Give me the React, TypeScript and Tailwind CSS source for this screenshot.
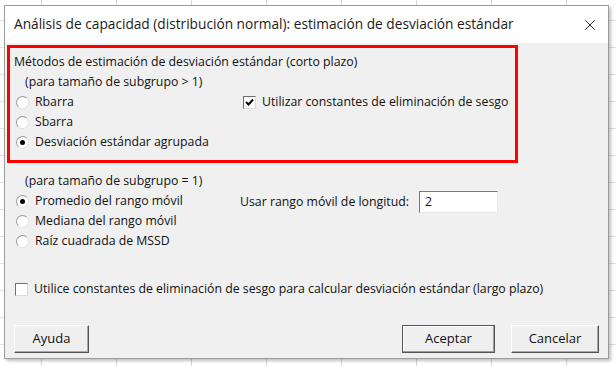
import { X } from "lucide-react";

function Radio({ checked, label }: { checked?: boolean; label: string }) {
  return (
    <div className="flex h-[20px] items-center">
      <span className="ml-[12px] flex h-[13px] w-[13px] items-center justify-center rounded-full border border-t-[#9a9a9a] border-l-[#9a9a9a] border-r-[#e3e3e3] border-b-[#e3e3e3] bg-white">
        {checked && <span className="h-[5px] w-[5px] rounded-full bg-black" />}
      </span>
      <span className="ml-[6px]">{label}</span>
    </div>
  );
}

function Check({ checked }: { checked?: boolean }) {
  return (
    <span className="flex h-[13px] w-[13px] shrink-0 items-center justify-center border border-t-[#6e6e6e] border-l-[#6e6e6e] border-r-[#dcdcdc] border-b-[#dcdcdc] bg-white">
      {checked && (
        <svg width="9" height="9" viewBox="0 0 9 9">
          <path d="M1 4 L3.5 6.5 L8 1.5" stroke="black" strokeWidth="2" fill="none" />
        </svg>
      )}
    </span>
  );
}

function Btn({ label, primary }: { label: string; primary?: boolean }) {
  return (
    <div
      className={`flex h-[28px] items-center justify-center border bg-[#efefef] text-[13px] ${
        primary
          ? "border-[#555] shadow-[inset_-1px_-1px_0_#9a9a9a,inset_1px_1px_0_#fff]"
          : "border-t-[#fff] border-l-[#fff] border-r-[#555] border-b-[#555] shadow-[inset_-1px_-1px_0_#a8a8a8]"
      }`}
    >
      {label}
    </div>
  );
}

export default function App() {
  return (
    <div className="h-[366px] w-[616px] overflow-hidden bg-white bg-[linear-gradient(90deg,#d6d6d6_1px,transparent_1px),linear-gradient(180deg,#e2e2e2_1px,transparent_1px)] bg-[size:75px_27px,75px_27px] bg-[position:41px_0,0_20px] pl-[4px] pt-[5px] font-['Open_Sans',sans-serif] text-[12.3px] text-[#111] whitespace-nowrap">
      <div className="flex h-[354px] w-[605px] flex-col border border-[#9c9c9c] bg-[#f0f0f0] shadow-[2px_2px_3px_rgba(0,0,0,0.25)]">
        {/* title bar */}
        <div className="flex h-[37px] shrink-0 items-center justify-between bg-white pl-[9px] pr-[9px]">
          <span className="text-[13.7px] text-[#1a1a1a]">
            Análisis de capacidad (distribución normal): estimación de desviación estándar
          </span>
          <X size={18} strokeWidth={1.3} className="text-[#222]" />
        </div>

        {/* short term */}
        <div className="ml-[2px] mt-[2px] w-[511px] border-[3px] border-[#ff0000] pb-[8px] pt-[4px]">
          <div className="flex h-[20px] items-center pl-[4px]">
            Métodos de estimación de desviación estándar (corto plazo)
          </div>
          <div className="flex h-[20px] items-center pl-[15px]">(para tamaño de subgrupo &gt; 1)</div>
          <div className="flex">
            <div className="-ml-[6px] w-[239px]">
              <Radio label="Rbarra" />
              <Radio label="Sbarra" />
              <Radio checked label="Desviación estándar agrupada" />
            </div>
            <div className="flex h-[20px] items-center gap-[6px]">
              <Check checked />
              <span>Utilizar constantes de eliminación de sesgo</span>
            </div>
          </div>
        </div>

        {/* individual */}
        <div className="mt-[8px] flex h-[20px] items-center pl-[20px]">(para tamaño de subgrupo = 1)</div>
        <div className="flex">
          <div className="-ml-[1px] w-[236px]">
            <Radio checked label="Promedio del rango móvil" />
            <Radio label="Mediana del rango móvil" />
            <Radio label="Raíz cuadrada de MSSD" />
          </div>
          <div className="flex h-[22px] items-center">
            <span>Usar rango móvil de longitud:</span>
            <div className="ml-[10px] flex h-[22px] w-[79px] items-center border border-t-[#7a7a7a] border-l-[#7a7a7a] border-r-[#e8e8e8] border-b-[#e8e8e8] bg-white pl-[5px]">
              2
            </div>
          </div>
        </div>

        <div className="mt-[28px] flex h-[20px] items-center gap-[6px] pl-[10px]">
          <Check />
          <span>Utilice constantes de eliminación de sesgo para calcular desviación estándar (largo plazo)</span>
        </div>

        {/* buttons */}
        <div className="mt-[26px] flex pl-[9px] pr-[9px]">
          <div className="w-[75px]">
            <Btn label="Ayuda" />
          </div>
          <div className="ml-auto w-[93px]">
            <Btn primary label="Aceptar" />
          </div>
          <div className="ml-[16px] w-[88px]">
            <Btn label="Cancelar" />
          </div>
        </div>
      </div>
    </div>
  );
}
